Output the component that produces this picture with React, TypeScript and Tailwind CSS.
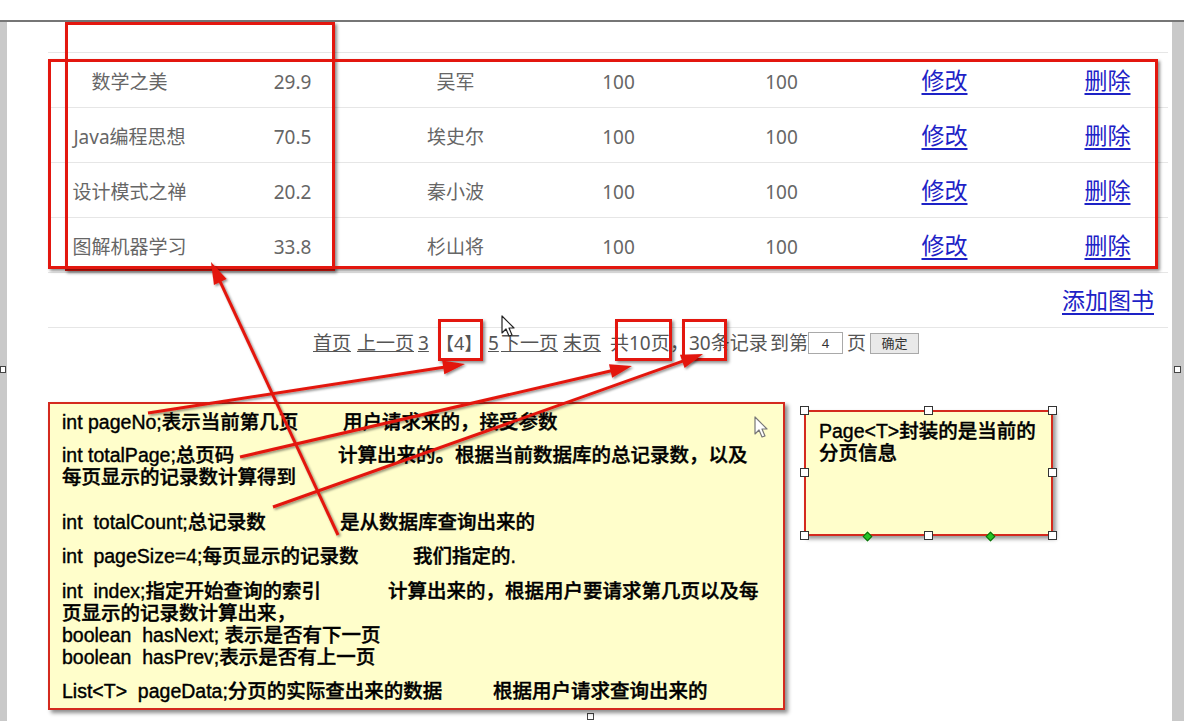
import React from "react";

const rows = [
  ["数学之美", "29.9", "吴军"],
  ["Java编程思想", "70.5", "埃史尔"],
  ["设计模式之禅", "20.2", "秦小波"],
  ["图解机器学习", "33.8", "杉山将"],
];

function Arrow({ x1, y1, x2, y2 }: { x1: number; y1: number; x2: number; y2: number }) {
  const dx = x2 - x1;
  const dy = y2 - y1;
  const len = Math.hypot(dx, dy);
  const ux = dx / len;
  const uy = dy / len;
  const hl = 22;
  const hw = 7;
  const bx = x2 - ux * hl;
  const by = y2 - uy * hl;
  const px = -uy;
  const py = ux;
  const pts = `${x2},${y2} ${bx + px * hw},${by + py * hw} ${bx - px * hw},${by - py * hw}`;
  return (
    <g>
      <line x1={x1} y1={y1} x2={bx + ux * 2} y2={by + uy * 2} stroke="#e3170f" strokeWidth={3} />
      <polygon points={pts} fill="#e3170f" />
    </g>
  );
}

function Handle({ x, y }: { x: number; y: number }) {
  return (
    <div
      className="absolute w-[9px] h-[9px] bg-white border border-[#333]"
      style={{ left: x - 4, top: y - 4 }}
    />
  );
}

function Diamond({ x, y }: { x: number; y: number }) {
  return (
    <div
      className="absolute w-[7px] h-[7px] bg-[#25c425] border border-[#0b6b0b] rotate-45"
      style={{ left: x - 3, top: y - 3 }}
    />
  );
}

function Cursor({ x, y, fill, stroke }: { x: number; y: number; fill: string; stroke: string }) {
  return (
    <svg className="absolute" style={{ left: x, top: y }} width="16" height="24" viewBox="0 0 16 24">
      <path d="M1 1 L1 18 L5 14 L8 21 L11 20 L8 13 L13 13 Z" fill={fill} stroke={stroke} strokeWidth="1.2" strokeLinejoin="round" />
    </svg>
  );
}

export default function App() {
  const cjk = "font-['Noto_Sans','Noto_Sans_CJK_SC',sans-serif]";
  const note = "font-['Liberation_Sans','Noto_Sans_CJK_SC',sans-serif]";
  const cell = "w-[163px] shrink-0 text-center whitespace-nowrap pt-[4px]";
  const link = "w-[163px] shrink-0 text-center text-[23px] text-[#1d22c6] underline underline-offset-4";
  return (
    <div className="relative w-[1184px] h-[721px] overflow-hidden bg-white">
      <div className="h-[20px] bg-white" />
      <div className="h-[2px] bg-[#767676]" />
      <div className="flex h-[699px]">
        <div className="w-[7px] bg-[#c9c9c9]" />
        <div className={`flex-1 pl-[41px] pr-[4px] ${cjk}`}>
          <div className="w-[1120px]">
            <div className="h-[30px]" />
            {rows.map((r, i) => (
              <div key={i} className="h-[55px] border-t border-[#e6e6e6] flex items-center">
                <div className="flex items-center shrink-0 text-[19px] text-[#666]">
                  <div className={cell}>{r[0]}</div>
                  <div className={cell}>{r[1]}</div>
                  <div className={cell}>{r[2]}</div>
                  <div className={cell}>100</div>
                  <div className={cell}>100</div>
                  <div className={link}>修改</div>
                  <div className={link}>删除</div>
                </div>
              </div>
            ))}
            <div className="h-[55px] border-t border-[#e6e6e6] flex items-center justify-end pr-[14px]">
              <span className="text-[23px] text-[#1d22c6] underline underline-offset-4">添加图书</span>
            </div>
            <div className="border-t border-[#e6e6e6] pt-[1px] flex items-center pl-[265px] text-[19px] text-[#555] whitespace-nowrap">
              <span className="w-[44px] shrink-0"><span className="underline">首页</span></span>
              <span className="w-[61px] shrink-0"><span className="underline">上一页</span></span>
              <span className="w-[18px] shrink-0"><span className="underline">3</span></span>
              <span className="w-[52px] shrink-0 text-[18px]">【4】</span>
              <span className="w-[13px] shrink-0"><span className="underline">5</span></span>
              <span className="w-[62px] shrink-0"><span className="underline">下一页</span></span>
              <span className="w-[47px] shrink-0"><span className="underline">末页</span></span>
              <span className="w-[60px] shrink-0">共10页</span>
              <span className="w-[100px] shrink-0">，30条记录</span>
              <span className="w-[38px] shrink-0">到第</span>
              <span className="w-[35px] h-[22px] shrink-0 border border-[#a9a9a9] text-[13px] text-[#333] flex items-center justify-center">4</span>
              <span className="w-[27px] shrink-0 pl-[4px]">页</span>
              <span className="w-[49px] h-[21px] shrink-0 bg-[#e9e9e9] border border-[#a9a9a9] text-[13px] text-[#333] flex items-center justify-center">确定</span>
            </div>
          </div>
        </div>
        <div className="w-[12px] bg-[#c9c9c9]" />
      </div>

      {/* edge handles */}
      <div className="absolute left-[0px] top-[366px] w-[6px] h-[7px] bg-white border border-[#444]" />
      <div className="absolute left-[1174px] top-[366px] w-[7px] h-[7px] bg-white border border-[#444]" />
      <div className="absolute left-[587px] top-[713px] w-[7px] h-[7px] bg-white border border-[#444]" />

      {/* yellow note */}
      <div className={`absolute left-[48px] top-[402px] w-[737px] h-[308px] bg-[#fffecb] border-2 border-[#d42a1e] shadow-[3px_3px_4px_rgba(0,0,0,0.45)] pl-[12px] pt-[7px] text-[19.5px] leading-[22px] text-[#000] font-medium [-webkit-text-stroke:0.4px_#000] whitespace-nowrap ${note}`}>
        <div>
          <span className="inline-block w-[281px]">int pageNo;表示当前第几页</span>用户请求来的，接受参数
        </div>
        <div className="mt-[11px]">
          <span className="inline-block w-[276px]">int totalPage;总页码</span>计算出来的。根据当前数据库的总记录数，以及
          <br />每页显示的记录数计算得到
        </div>
        <div className="mt-[23px]">
          <span className="inline-block w-[278px]">int&nbsp; totalCount;总记录数</span>是从数据库查询出来的
        </div>
        <div className="mt-[12px]">
          <span className="inline-block w-[351px]">int&nbsp; pageSize=4;每页显示的记录数</span>我们指定的.
        </div>
        <div className="mt-[13px]">
          <span className="inline-block w-[326px]">int&nbsp; index;指定开始查询的索引</span>计算出来的，根据用户要请求第几页以及每
          <br />页显示的记录数计算出来，
          <br />boolean&nbsp; hasNext; 表示是否有下一页
          <br />boolean&nbsp; hasPrev;表示是否有上一页
        </div>
        <div className="mt-[12px]">
          <span className="inline-block w-[431px]">List&lt;T&gt;&nbsp; pageData;分页的实际查出来的数据</span>根据用户请求查询出来的
        </div>
      </div>

      {/* Page<T> note */}
      <div className={`absolute left-[804px] top-[410px] w-[249px] h-[126px] bg-[#fffecb] border-2 border-[#d42a1e] shadow-[3px_3px_4px_rgba(0,0,0,0.4)] pl-[13px] pt-[8px] text-[19.5px] leading-[22px] text-[#000] font-medium [-webkit-text-stroke:0.4px_#000] ${note}`}>
        Page&lt;T&gt;封装的是当前的
        <br />分页信息
      </div>
      <Handle x={804} y={410} />
      <Handle x={928} y={410} />
      <Handle x={1052} y={410} />
      <Handle x={804} y={472} />
      <Handle x={1052} y={472} />
      <Handle x={804} y={535} />
      <Handle x={928} y={535} />
      <Handle x={1052} y={535} />
      <Diamond x={867} y={536} />
      <Diamond x={990} y={536} />

      {/* red highlight boxes */}
      <div className="absolute left-[65px] top-[22px] w-[270px] h-[249px] border-[3px] border-[#e3170f] shadow-[2px_2px_3px_rgba(0,0,0,0.45)]" />
      <div className="absolute left-[48px] top-[59px] w-[1110px] h-[210px] border-[3px] border-[#e3170f] shadow-[2px_2px_3px_rgba(0,0,0,0.45)]" />
      <div className="absolute left-[438px] top-[319px] w-[45px] h-[42px] border-[3px] border-[#e3170f] shadow-[2px_2px_3px_rgba(0,0,0,0.45)]" />
      <div className="absolute left-[615px] top-[319px] w-[57px] h-[42px] border-[3px] border-[#e3170f] shadow-[2px_2px_3px_rgba(0,0,0,0.45)]" />
      <div className="absolute left-[682px] top-[319px] w-[45px] h-[42px] border-[3px] border-[#e3170f] shadow-[2px_2px_3px_rgba(0,0,0,0.45)]" />

      {/* arrows */}
      <svg className="absolute left-0 top-0 pointer-events-none" width="1184" height="721">
        <defs>
          <filter id="sh" x="-10%" y="-10%" width="120%" height="120%">
            <feDropShadow dx="1.5" dy="1.5" stdDeviation="1" floodOpacity="0.45" />
          </filter>
        </defs>
        <g filter="url(#sh)">
          <Arrow x1={148} y1={413} x2={465} y2={364} />
          <Arrow x1={240} y1={457} x2={632} y2={366} />
          <Arrow x1={273} y1={507} x2={703} y2={354} />
          <Arrow x1={338} y1={535} x2={211} y2={262} />
        </g>
      </svg>

      <Cursor x={501} y={315} fill="#fff" stroke="#222" />
      <Cursor x={754} y={416} fill="#fff" stroke="#777" />
    </div>
  );
}
